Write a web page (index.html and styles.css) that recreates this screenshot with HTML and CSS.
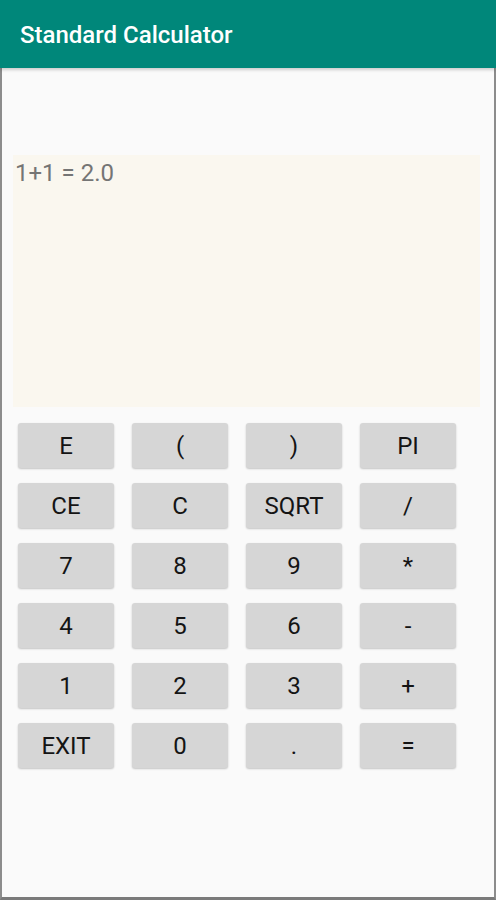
FILE: index.html
```html
<!DOCTYPE html>
<html>
<head>
<meta charset="utf-8">
<link rel="stylesheet" href="styles.css">
</head>
<body>
<header class="appbar"><span class="title">Standard Calculator</span></header>
<main class="content">
  <div class="display">1+1 = 2.0</div>
  <div class="keys">
    <button class="key">E</button><button class="key">(</button><button class="key">)</button><button class="key">PI</button>
    <button class="key">CE</button><button class="key">C</button><button class="key">SQRT</button><button class="key">/</button>
    <button class="key">7</button><button class="key">8</button><button class="key">9</button><button class="key">*</button>
    <button class="key">4</button><button class="key">5</button><button class="key">6</button><button class="key">-</button>
    <button class="key">1</button><button class="key">2</button><button class="key">3</button><button class="key">+</button>
    <button class="key">EXIT</button><button class="key">0</button><button class="key">.</button><button class="key">=</button>
  </div>
</main>
</body>
</html>
```
FILE: styles.css
```css
html, body {
  margin: 0;
  padding: 0;
  height: 900px;
  overflow: hidden;
  background: #fafafa;
  font-family: Roboto, "Liberation Sans", sans-serif;
}
.appbar {
  height: 68px;
  background: #00877a;
  display: flex;
  align-items: center;
  padding-left: 20px;
  box-shadow: 0 2px 3px rgba(0,0,0,0.18);
  position: relative;
  z-index: 1;
}
.title {
  color: #ffffff;
  font-size: 24px;
  font-weight: 500;
  margin-top: 2px;
}
.content {
  box-sizing: border-box;
  height: 832px;
  border-left: 2px solid #8c8c8c;
  border-right: 2px solid #8c8c8c;
  border-bottom: 3px solid #7a7a7a;
  padding: 87px 14px 0 11px;
}
.display {
  height: 252px;
  background: #faf7ef;
  color: #757575;
  font-size: 24px;
  padding: 4px 2px;
  box-sizing: border-box;
  line-height: 28px;
}
.keys {
  display: grid;
  grid-template-columns: repeat(4, 96px);
  column-gap: 18px;
  row-gap: 15px;
  margin-top: 16px;
  padding-left: 5px;
}
.key {
  height: 45px;
  border: none;
  border-radius: 3px;
  background: #d6d6d6;
  box-shadow: 0 1px 2px rgba(0,0,0,0.22);
  font-family: Roboto, "Liberation Sans", sans-serif;
  font-size: 24px;
  font-weight: 400;
  color: #141414;
  padding: 0;
}
```
